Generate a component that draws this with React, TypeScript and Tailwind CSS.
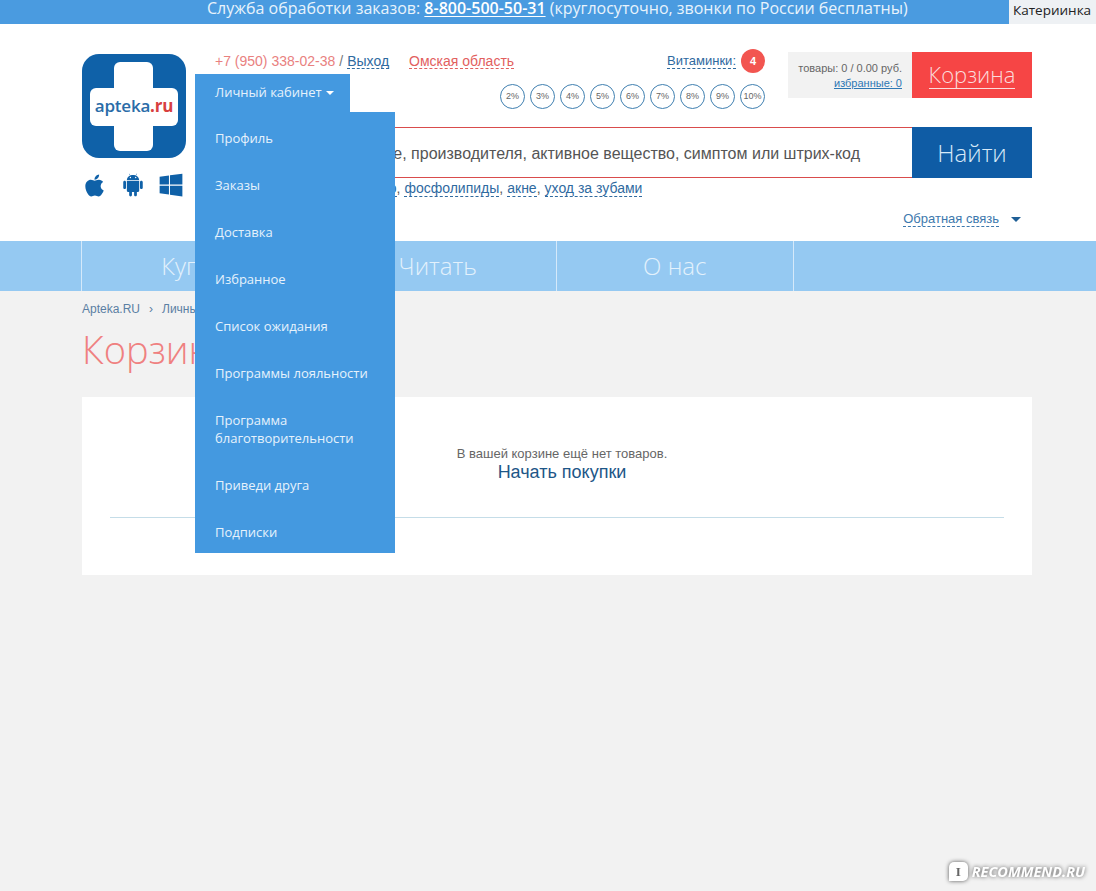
import { FaApple, FaWindows } from 'react-icons/fa';
import { AiFillAndroid } from 'react-icons/ai';

const discounts = ['2%', '3%', '4%', '5%', '6%', '7%', '8%', '9%', '10%'];

const accountLinks = [
  'Профиль',
  'Заказы',
  'Доставка',
  'Избранное',
  'Список ожидания',
  'Программы лояльности',
  'Программа благотворительности',
  'Приведи друга',
  'Подписки',
];

const searchHints = ['льняное масло', 'фосфолипиды', 'акне', 'уход за зубами'];

const navItems = ['Купить', 'Читать', 'О нас'];

function Logo() {
  return (
    <div className="relative w-[104px] h-[104px]">
      <svg viewBox="0 0 104 104" className="w-full h-full">
        <rect width="104" height="104" rx="17" fill="#0f61a8" />
        <rect x="32" y="8" width="39" height="89" rx="6" fill="#fff" />
        <rect x="8" y="34" width="88" height="38" rx="6" fill="#fff" />
      </svg>
      <div className="absolute inset-x-0 top-[41px] text-center font-['Open_Sans',sans-serif] text-[17px] leading-[22px] font-semibold tracking-[-0.2px] text-[#2a6ca8]">
        apteka<span className="font-bold text-[#d8403f]">.ru</span>
      </div>
    </div>
  );
}

export default function App() {
  return (
    <div className="relative min-h-screen bg-[#f2f2f2] font-['Liberation_Sans',sans-serif]">
      {/* Phone strip */}
      <div className="flex h-6 bg-[#4a9be0]">
        <p className="flex-1 pl-[207px] font-['Open_Sans',sans-serif] text-[16px] leading-[16px] text-[#e8f3fc] whitespace-nowrap">
          Служба обработки заказов: <span className="font-semibold text-white underline underline-offset-2">8-800-500-50-31</span> (круглосуточно, звонки по России бесплатны)
        </p>
        <div className="w-[87px] pl-1 bg-[#eef1f4] font-['Open_Sans',sans-serif] text-[13.5px] leading-[20px] text-[#222] whitespace-nowrap">Катериинка</div>
      </div>

      {/* Header */}
      <header className="h-[217px] bg-white">
        <div className="flex w-[950px] ml-[82px] pt-7">
          <div className="w-[104px] pt-[2px]">
            <Logo />
            <div className="flex items-center justify-between mt-[14px] pr-[2px] text-[#0f61a8]">
              <FaApple className="w-[25px] h-[25px]" />
              <AiFillAndroid className="w-[26px] h-[26px]" />
              <FaWindows className="w-[26px] h-[26px]" />
            </div>
          </div>

          <div className="relative flex-1 ml-[29px]">
            {/* Account menu */}
            <div className="absolute z-10 left-[-20px] top-[22px] font-['Open_Sans',sans-serif] text-[13px] text-[#e6f2fc]">
              <div className="flex items-center gap-1 w-[155px] h-[38px] pl-5 bg-[#4499e0]">
                Личный кабинет
                <span className="w-0 h-0 border-x-[4px] border-x-transparent border-t-[4px] border-t-white" />
              </div>
              <ul className="flex flex-col w-[200px] pt-[2px] bg-[#4499e0]">
                {accountLinks.map((link) => (
                  <li key={link} className="px-5 py-[14.5px] leading-[18px] last:pb-[12px]">
                    {link}
                  </li>
                ))}
              </ul>
            </div>

            <div className="flex h-[75px]">
              <div className="flex flex-col w-[550px]">
                <div className="flex items-center h-[18px] text-[14px]">
                  <span className="text-[#e9817f]">+7 (950) 338-02-38</span>
                  <span className="text-[#777] ml-1">/</span>
                  <span className="ml-1 text-[#2f6a9f] border-b border-dashed border-[#2f6a9f] leading-[14px]">Выход</span>
                  <span className="ml-5 text-[#e2605e] border-b border-dashed border-[#e2605e] leading-[14px]">Омская область</span>
                  <span className="ml-auto text-[13px] text-[#2f6a9f] border-b border-dashed border-[#2f6a9f] leading-[14px]">Витаминки:</span>
                  <span className="flex items-center justify-center w-6 h-6 ml-[5px] rounded-full bg-[#f25550] text-[11px] font-bold text-white">4</span>
                </div>
                <div className="flex justify-end gap-[5px] mt-[14px]">
                  {discounts.map((d) => (
                    <span key={d} className="flex items-center justify-center w-[25px] h-[25px] rounded-full border border-[#3f7fb0] text-[9px] text-[#666]">
                      {d}
                    </span>
                  ))}
                </div>
              </div>
              <div className="flex ml-auto h-[46px]">
                <div className="w-[124px] pt-[9px] pr-[10px] bg-[#f2f2f2] text-right text-[11px] leading-[15px] text-[#666]">
                  <div>товары: 0 / 0.00 руб.</div>
                  <div className="text-[#2f78b4] underline">избранные: 0</div>
                </div>
                <div className="flex items-center justify-center w-[120px] bg-[#f64545] font-['Open_Sans',sans-serif] text-[22px] font-light text-[#fbdcdc]">
                  <span className="border-b border-[#fbdcdc] leading-[27px]">Корзина</span>
                </div>
              </div>
            </div>

            {/* Search */}
            <div className="flex h-[51px]">
              <div className="flex flex-1 items-center justify-end pt-[3px] pr-[52px] overflow-hidden border-y border-y-[#d94c4c] text-[16px] text-[#555] whitespace-nowrap">
                Введите название, производителя, активное вещество, симптом или штрих-код
              </div>
              <button className="w-[120px] bg-[#0f5ca5] font-['Open_Sans',sans-serif] text-[24px] font-light text-[#d7e9f8]">Найти</button>
            </div>
            <div className="flex items-center mt-[2px] pl-[83px] text-[14px] leading-[16px] text-[#555]">
              {searchHints.map((hint, i) => (
                <span key={hint} className="whitespace-nowrap">
                  <span className="text-[#2f6a9f] border-b border-dashed border-[#2f6a9f]">{hint}</span>
                  {i < searchHints.length - 1 && <span className="mr-1">,</span>}
                </span>
              ))}
            </div>
            <div className="flex items-center justify-end gap-3 mt-[16px] pr-[11px] text-[13px] leading-[14px]">
              <span className="text-[#3d78ad] border-b border-dashed border-[#3d78ad]">Обратная связь</span>
              <span className="w-0 h-0 border-x-[5px] border-x-transparent border-t-[5px] border-t-[#1f5f96]" />
            </div>
          </div>
        </div>
      </header>

      {/* Main nav */}
      <nav className="h-[50px] bg-[#95c9f2]">
        <div className="flex ml-[81px] h-full">
          {navItems.map((item) => (
            <div key={item} className="flex items-center justify-center w-[237.5px] h-full border-l border-[#d5e9fa] font-['Open_Sans',sans-serif] text-[24px] font-light text-[#e3f1fc] last:border-r">
              {item}
            </div>
          ))}
        </div>
      </nav>

      <main className="w-[950px] ml-[82px]">
        <div className="flex items-center gap-[9px] pt-[10px] text-[12px] leading-[16px] text-[#5b7fa3]">
          <span>Apteka.RU</span>
          <span>›</span>
          <span>Личный кабинет</span>
        </div>
        <h1 className="mt-[6px] font-['Open_Sans',sans-serif] text-[38px] leading-[52px] font-light text-[#ef8080]">Корзина</h1>
        <section className="mt-[22px] h-[178px] px-7 bg-white">
          <div className="flex flex-col items-center pt-[49px] pl-[10px] h-[121px] border-b border-[#c5dde8]">
            <p className="text-[13px] leading-[16px] text-[#666]">В вашей корзине ещё нет товаров.</p>
            <a className="text-[18px] leading-[20px] text-[#1d5687]">Начать покупки</a>
          </div>
        </section>
      </main>

      {/* Site watermark */}
      <div className="absolute right-[11px] bottom-[10px] flex items-center gap-[4px] text-white [filter:drop-shadow(0_0_2px_#555)]">
        <span className="flex items-center justify-center w-[19px] h-[19px] rounded-[5px] rounded-bl-none bg-white font-['Liberation_Serif',serif] text-[13px] font-bold text-[#666]">I</span>
        <span className="font-['Open_Sans',sans-serif] text-[14.5px] leading-[18px] font-bold italic">RECOMMEND.RU</span>
      </div>
    </div>
  );
}
